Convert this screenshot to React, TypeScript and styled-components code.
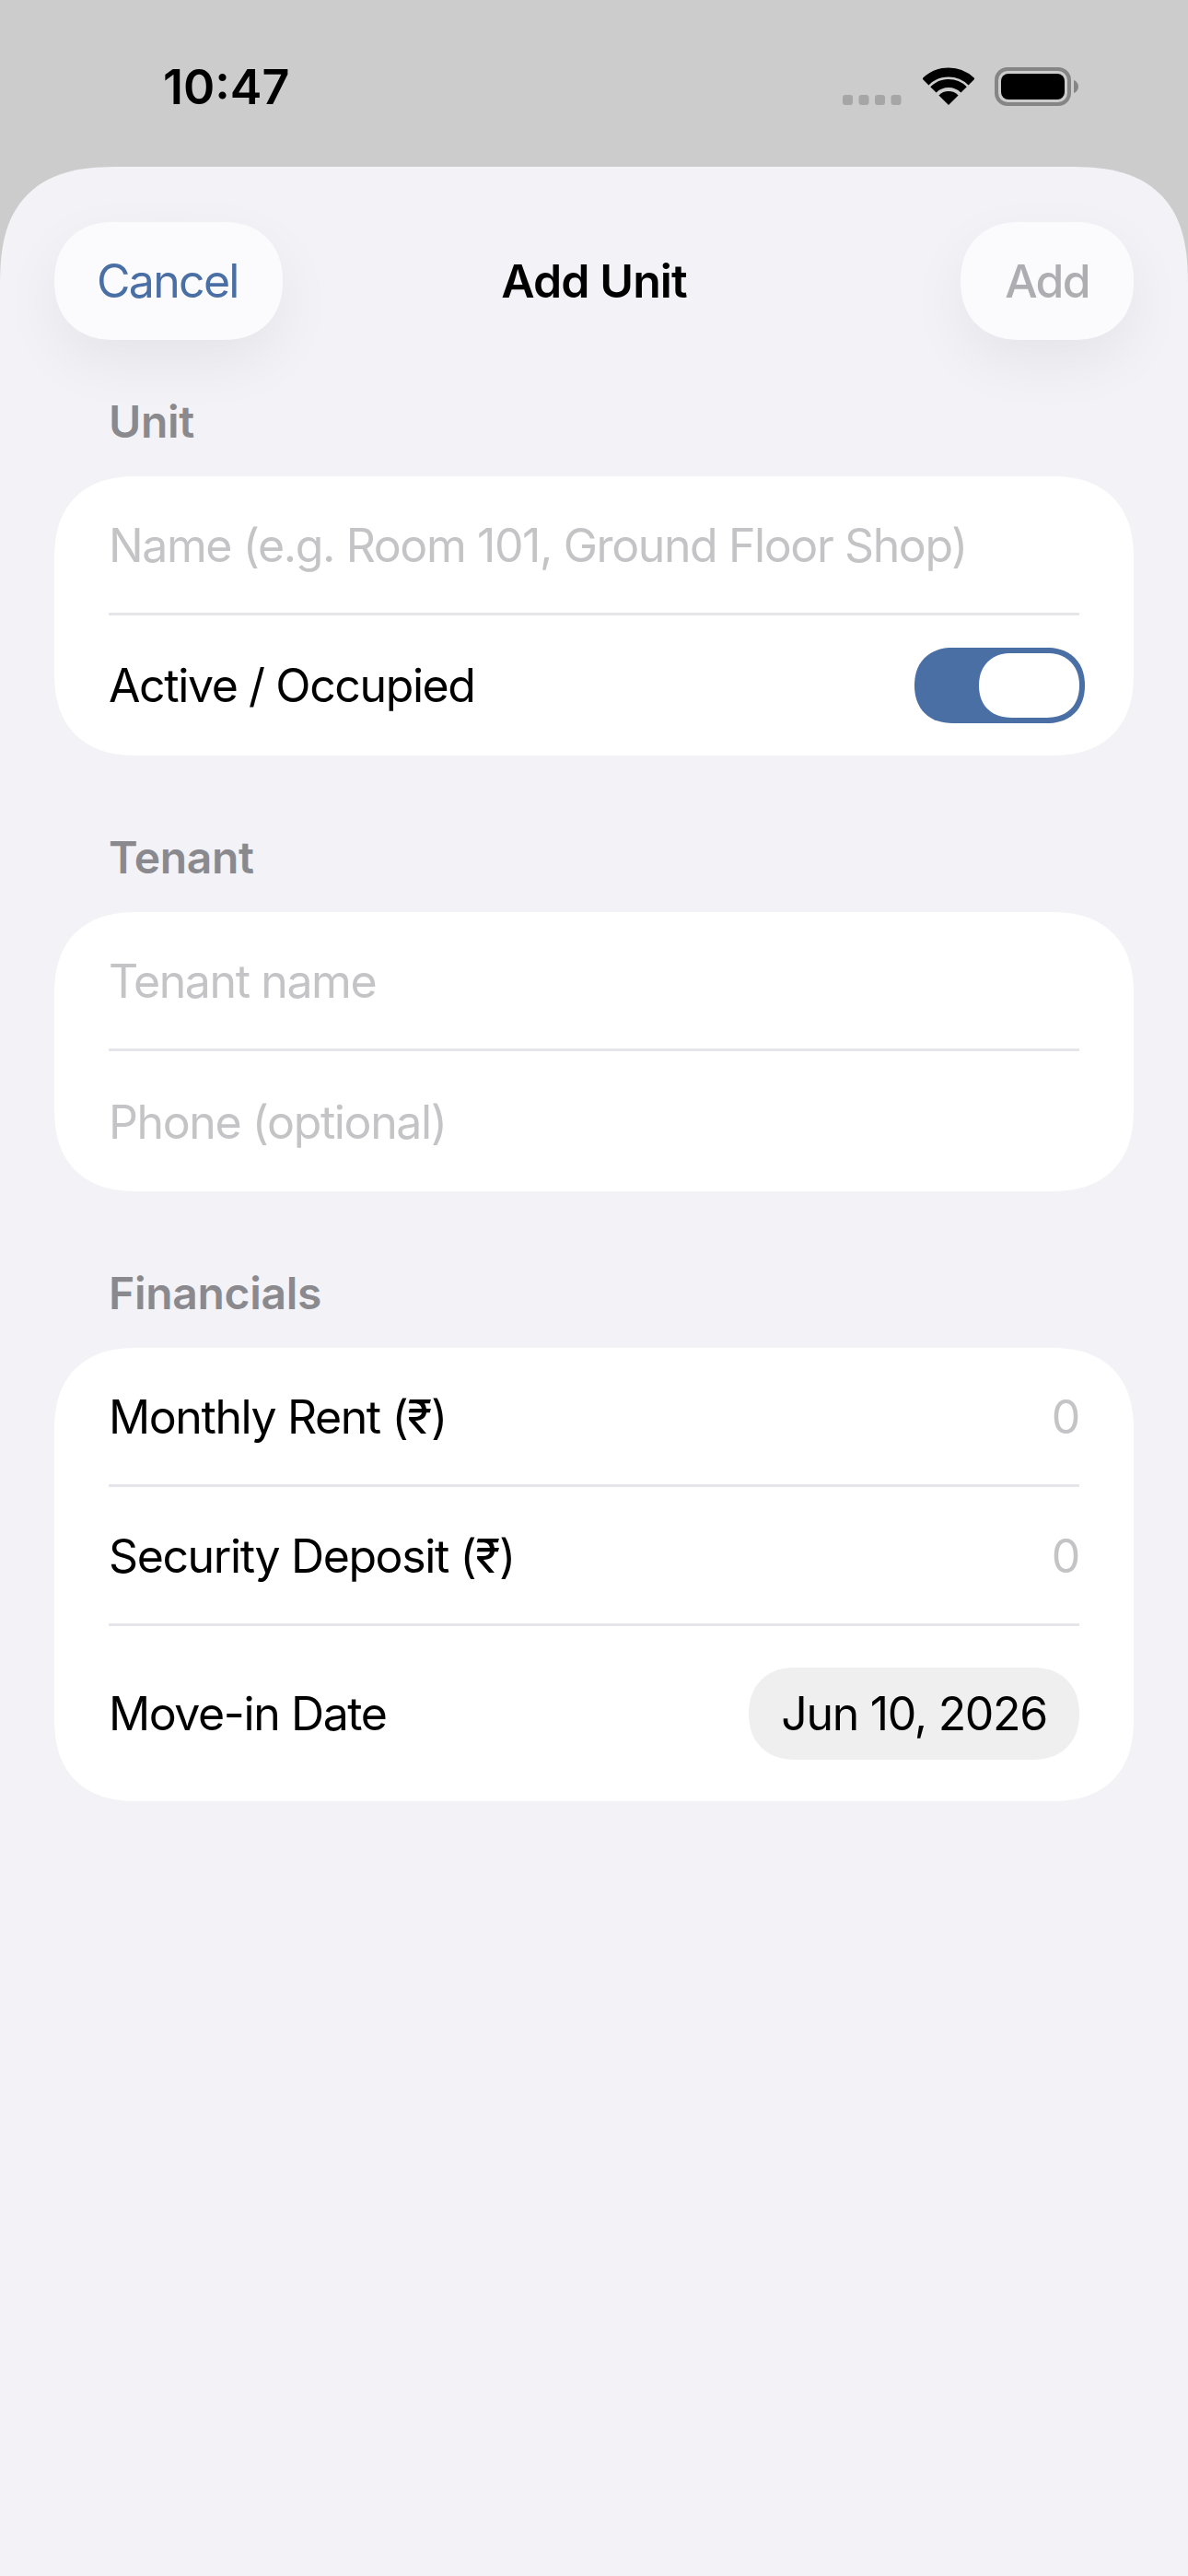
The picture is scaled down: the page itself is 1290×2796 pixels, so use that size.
import React from 'react';
import styled, { createGlobalStyle } from 'styled-components';

const GlobalStyle = createGlobalStyle`
  html, body {
    margin: 0;
    padding: 0;
    background: #cccccc;
  }
  * {
    box-sizing: border-box;
  }
  body {
    font-family: Inter, "Noto Sans", "Liberation Sans", sans-serif;
    -webkit-font-smoothing: antialiased;
  }
`;

const Screen = styled.div`
  width: 1290px;
  height: 2796px;
  display: flex;
  flex-direction: column;
  overflow: hidden;
  background: #cccccc;
`;

const StatusBar = styled.div`
  height: 181px;
  flex: none;
  display: flex;
  justify-content: space-between;
  align-items: flex-start;
  padding: 64px 119px 0 177px;
`;

const Time = styled.div`
  font-size: 52px;
  line-height: 62px;
  font-weight: 600;
  color: #000;
`;

const StatusIcons = styled.div`
  display: flex;
  align-items: flex-start;
  gap: 22px;
  padding-top: 9px;
`;

const Sheet = styled.div`
  flex: 1;
  background: #f2f2f7;
  border-radius: 130px 130px 0 0;
  corner-shape: superellipse(1.4);
  padding: 60px 59px 0;
`;

const Header = styled.div`
  display: grid;
  grid-template-columns: 1fr auto 1fr;
  align-items: center;
  margin-bottom: 59px;
`;

const NavButton = styled.button<{ $side: 'left' | 'right'; $muted?: boolean }>`
  justify-self: ${props => (props.$side === 'left' ? 'start' : 'end')};
  height: 128px;
  padding: 0 48px 0 ${props => (props.$side === 'left' ? 46 : 48)}px;
  border: none;
  border-radius: 64px;
  corner-shape: superellipse(1.15);
  background: #fbfbfe;
  box-shadow: 0 24px 64px rgba(0, 0, 0, 0.06);
  font-family: inherit;
  font-size: 50px;
  letter-spacing: -1.7px;
  font-weight: ${props => (props.$muted ? 500 : 400)};
  color: ${props => (props.$muted ? '#aeaeb2' : '#4a6fa5')};
`;

const Title = styled.div`
  font-size: 50px;
  font-weight: 600;
  letter-spacing: -0.9px;
  color: #000;
`;

const Section = styled.section`
  margin-bottom: 81px;
`;

const SectionLabel = styled.div`
  font-size: 48px;
  line-height: 60px;
  font-weight: 600;
  letter-spacing: -0.3px;
  color: #8a8a8e;
  padding-left: 59px;
  margin-bottom: 29px;
`;

const Card = styled.div`
  background: #ffffff;
  border-radius: 90px;
  corner-shape: superellipse(1.25);
  padding: 0 59px;
`;

const Row = styled.div<{ $tall?: boolean; $last?: boolean; $input?: boolean }>`
  height: ${props => (props.$tall ? 190 : props.$last ? 152 : 151)}px;
  padding-top: ${props => (props.$input ? 2 : 0)}px;
  display: flex;
  align-items: center;
  justify-content: space-between;
  border-bottom: ${props => (props.$last ? 'none' : '3px solid #e5e5ea')};
`;

const RowLabel = styled.span`
  font-size: 50px;
  letter-spacing: -1.4px;
  color: #000;
`;

const Placeholder = styled.span`
  font-size: 50px;
  letter-spacing: -1.4px;
  color: #c4c4c6;
`;

const Toggle = styled.div`
  width: 185px;
  height: 82px;
  margin-right: -6px;
  padding: 6px;
  border-radius: 41px;
  corner-shape: superellipse(1.15);
  background: #4a6fa5;
  display: flex;
  justify-content: flex-end;
`;

const Knob = styled.div`
  width: 109px;
  height: 70px;
  border-radius: 35px;
  corner-shape: superellipse(1.15);
  background: #ffffff;
`;

const DatePill = styled.div`
  height: 100px;
  padding: 0 35px;
  border-radius: 50px;
  corner-shape: superellipse(1.15);
  background: #efeff0;
  display: flex;
  align-items: center;
  font-size: 50px;
  letter-spacing: -1.3px;
  color: #000;
`;

const CellularDots = () => (
  <svg width="64" height="41" viewBox="0 0 64 41" style={{ marginRight: 1 }}>
    {[0, 17.5, 35, 52.5].map(x => (
      <rect key={x} x={x} y="30" width="11" height="11" rx="3" fill="#a6a6a6" />
    ))}
  </svg>
);

const WifiIcon = () => (
  <svg width="56" height="41" viewBox="0 0 56 41">
    <path d="M2.9 15.9A35.5 35.5 0 0 1 53.1 15.9" fill="none" stroke="#000" strokeWidth="10" />
    <path d="M11.4 24.4A23.5 23.5 0 0 1 44.6 24.4" fill="none" stroke="#000" strokeWidth="9" />
    <path d="M28 41L17.4 30.4A15 15 0 0 1 38.6 30.4Z" fill="#000" />
  </svg>
);

const BatteryIcon = () => (
  <svg width="91" height="42" viewBox="0 0 91 42">
    <rect x="2" y="2" width="79" height="38" rx="12" fill="none" stroke="#858585" strokeWidth="4" />
    <rect x="7" y="7" width="69" height="28" rx="8" fill="#000" />
    <path d="M86 14C89 15 91 18 91 21S89 27 86 28Z" fill="#858585" />
  </svg>
);

export default function App() {
  return (
    <Screen>
      <GlobalStyle />
      <StatusBar>
        <Time>10:47</Time>
        <StatusIcons>
          <CellularDots />
          <WifiIcon />
          <BatteryIcon />
        </StatusIcons>
      </StatusBar>
      <Sheet>
        <Header>
          <NavButton $side="left">Cancel</NavButton>
          <Title>Add Unit</Title>
          <NavButton $side="right" $muted>Add</NavButton>
        </Header>
        <Section>
          <SectionLabel>Unit</SectionLabel>
          <Card>
            <Row $input>
              <Placeholder>Name (e.g. Room 101, Ground Floor Shop)</Placeholder>
            </Row>
            <Row $last>
              <RowLabel>Active / Occupied</RowLabel>
              <Toggle>
                <Knob />
              </Toggle>
            </Row>
          </Card>
        </Section>
        <Section>
          <SectionLabel>Tenant</SectionLabel>
          <Card>
            <Row $input>
              <Placeholder>Tenant name</Placeholder>
            </Row>
            <Row $last $input>
              <Placeholder>Phone (optional)</Placeholder>
            </Row>
          </Card>
        </Section>
        <Section>
          <SectionLabel>Financials</SectionLabel>
          <Card>
            <Row $input>
              <RowLabel>Monthly Rent (₹)</RowLabel>
              <Placeholder>0</Placeholder>
            </Row>
            <Row $input>
              <RowLabel>Security Deposit (₹)</RowLabel>
              <Placeholder>0</Placeholder>
            </Row>
            <Row $tall $last>
              <RowLabel>Move-in Date</RowLabel>
              <DatePill>Jun 10, 2026</DatePill>
            </Row>
          </Card>
        </Section>
      </Sheet>
    </Screen>
  );
}
